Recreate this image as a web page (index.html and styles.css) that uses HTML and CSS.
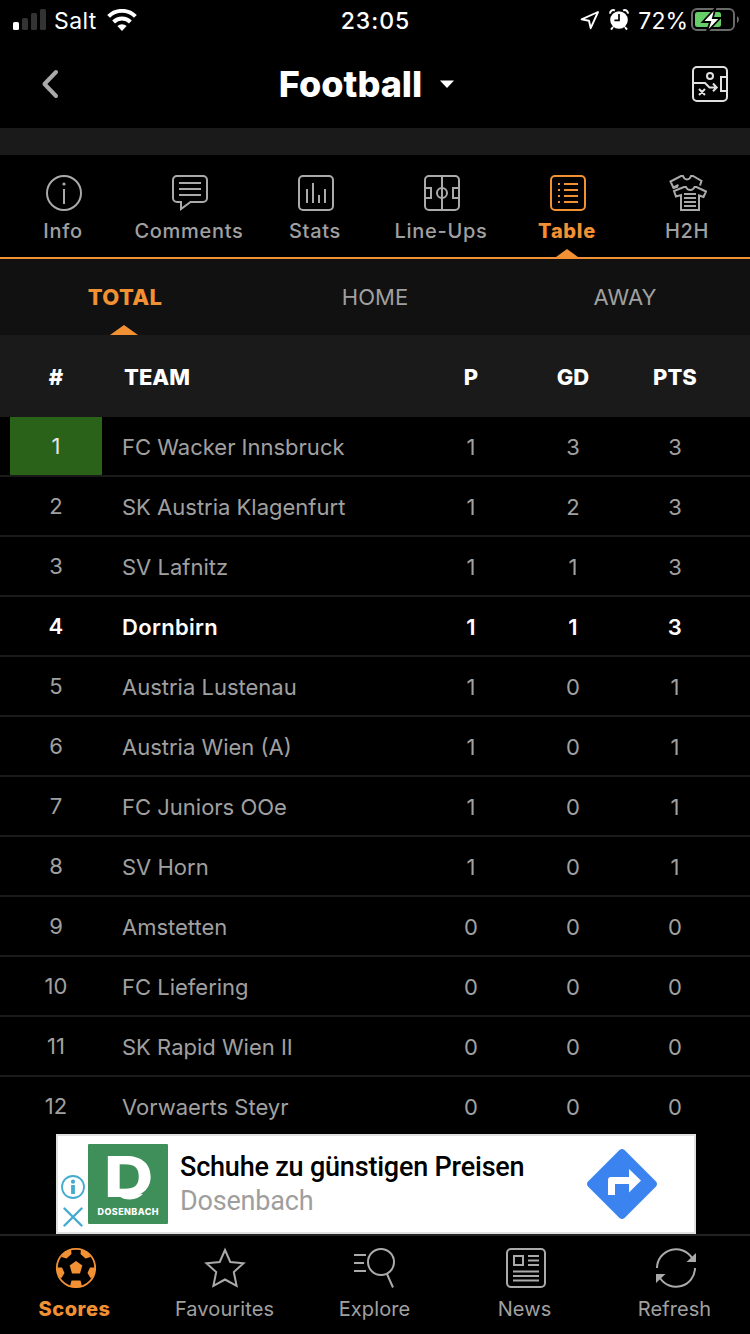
FILE: index.html
```
<!DOCTYPE html>
<html lang="en">
<head>
    <meta charset="UTF-8">
    <meta name="viewport" content="width=device-width, initial-scale=1.0">
    <title>Football</title>
    <link rel="stylesheet" href="styles.css">
</head>
<body>
    <div class="app">

        <div class="status">
            <div class="status-left">
                <svg width="34" height="22" viewBox="0 0 34 22">
                    <rect x="0" y="13" width="6" height="8" rx="1.5" fill="#fff"/>
                    <rect x="9" y="9" width="6" height="12" rx="1.5" fill="#333"/>
                    <rect x="18" y="4" width="6" height="17" rx="1.5" fill="#333"/>
                    <rect x="27" y="0" width="6" height="21" rx="1.5" fill="#333"/>
                </svg>
                <span class="carrier">Salt</span>
                <svg class="wifi" width="30" height="22" viewBox="0 0 30 22" fill="none" stroke="#fff" stroke-width="4">
                    <path d="M1.6 7.4a19 19 0 0 1 26.8 0"/>
                    <path d="M6.600 13a12 12 0 0 1 16.800 0"/>
                    <path d="M15 22l-4.6-4.9a6.6 6.6 0 0 1 9.2 0z" fill="#fff" stroke="none"/>
                </svg>
            </div>
            <div class="time">23:05</div>
            <div class="status-right">
                <svg width="20" height="20" viewBox="0 0 20 20" fill="none" stroke="#fff" stroke-width="1.9" stroke-linejoin="round">
                    <path d="M18 2L1.6 9.4l7.4 1.4 1.7 7.4z"/>
                </svg>
                <svg class="alarm" width="20" height="22" viewBox="0 0 20 22">
                    <circle cx="10" cy="11" r="8.8" fill="#fff"/>
                    <path d="M1.2 4.6a3 3 0 0 1 4.6-3M14.2 1.6a3 3 0 0 1 4.6 3M4 18l-2 2.6M16 18l2 2.6" stroke="#fff" stroke-width="2" fill="none"/>
                    <path d="M10 5v6.4H5.4" stroke="#000" stroke-width="1.7" fill="none"/>
                </svg>
                <span class="percent">72%</span>
                <svg width="49" height="26" viewBox="0 0 49 26">
                    <rect x="1" y="2" width="42" height="21" rx="5" fill="none" stroke="#6a6a6a" stroke-width="2"/>
                    <path d="M46 9.3c2.6 1.2 2.6 5.4 0 6.6z" fill="#6a6a6a"/>
                    <rect x="4" y="5" width="26" height="15" rx="2.5" fill="#67ce67"/>
                    <path d="M24.5 1L11.5 15h7.6l-3.6 10.6L29.3 11h-7.4z" fill="#fff" stroke="#000" stroke-width="1.8"/>
                </svg>
            </div>
        </div>

        <div class="navbar">
            <svg width="18" height="30" viewBox="0 0 18 30" fill="none" stroke="#aaa" stroke-width="4" stroke-linecap="round" stroke-linejoin="round">
                <path d="M15 3L3.5 15 15 27"/>
            </svg>
            <div class="title">Football
                <svg width="16" height="9" viewBox="0 0 16 9"><path d="M1 .5h14L8 8z" fill="#fff"/></svg>
            </div>
            <svg width="36" height="36" viewBox="0 0 36 36" fill="none" stroke="#e0e0e0" stroke-width="2">
                <rect x="1" y="1" width="34" height="34" rx="4"/>
                <path d="M35 11h-6v14h6M1 17h12l4.500 4.500H24M21 17.500l3.700 4L21 25.300M7 23l6 6M13 23l-6 6"/>
                <circle cx="18" cy="10" r="3"/>
            </svg>
        </div>
        <div class="strip"></div>

        <div class="tabs">
            <div class="tab">
                <svg width="36" height="36" viewBox="0 0 36 36" fill="none" stroke="currentColor" stroke-width="2">
                    <circle cx="18" cy="18" r="17"/>
                    <path d="M18 14v15"/>
                    <circle cx="18" cy="9" r="1.6" fill="currentColor" stroke="none"/>
                </svg>
                <span>Info</span>
            </div>
            <div class="tab">
                <svg width="36" height="36" viewBox="0 0 36 36" fill="none" stroke="currentColor" stroke-width="2">
                    <path d="M5 1h26a4 4 0 0 1 4 4v18a4 4 0 0 1-4 4H18.500l-9.500 7v-7H5a4 4 0 0 1-4-4V5a4 4 0 0 1 4-4z"/>
                    <path d="M7 8h22M7 14h22M7 20h22"/>
                </svg>
                <span>Comments</span>
            </div>
            <div class="tab">
                <svg width="36" height="36" viewBox="0 0 36 36" fill="none" stroke="currentColor" stroke-width="2">
                    <rect x="1" y="1" width="34" height="34" rx="4"/>
                    <path d="M9 14v14M15 8v20M21 20v8M27 14v14"/>
                </svg>
                <span>Stats</span>
            </div>
            <div class="tab">
                <svg width="36" height="36" viewBox="0 0 36 36" fill="none" stroke="currentColor" stroke-width="2">
                    <rect x="1" y="1" width="34" height="34" rx="4"/>
                    <path d="M18 1v34M1 13h6v10H1M35 13h-6v10h6"/>
                    <circle cx="18" cy="18" r="5"/>
                </svg>
                <span>Line-Ups</span>
            </div>
            <div class="tab active">
                <svg width="36" height="36" viewBox="0 0 36 36" fill="none" stroke="currentColor" stroke-width="2">
                    <rect x="1" y="1" width="34" height="34" rx="4"/>
                    <path d="M14 9h14M14 15h14M14 21h14M14 27h14M8 9h2M8 15h2M8 21h2M8 27h2"/>
                </svg>
                <span>Table</span>
            </div>
            <div class="tab last">
                <svg width="38" height="36" viewBox="0 0 38 36" fill="none" stroke="currentColor" stroke-width="2">
                    <path d="M9 11.500l-4.500 1.500L1.500 6.500 12 1h2c1.500 4.500 6.500 4.500 8 0h2l8.500 5-1.500 4.500M4.500 12.500l5-2.500"/>
                    <path d="M12 35V20l-5 1.500-2-5.500L15 12h2c1.500 4 7 4 8.500 0h2L37 16.500 34.500 22 30 20.500V35z"/>
                    <path d="M15 19h12M15 23h12M15 27h12M15 31h12"/>
                </svg>
                <span>H2H</span>
            </div>
        </div>

        <div class="subtabs">
            <div class="subtab active">TOTAL</div>
            <div class="subtab">HOME</div>
            <div class="subtab">AWAY</div>
        </div>

        <div class="row head"><span>#</span><span class="team">TEAM</span><span>P</span><span>GD</span><span>PTS</span></div>
        <div class="table">
            <div class="row"><span class="pos green">1</span><span class="team">FC Wacker Innsbruck</span><span>1</span><span>3</span><span>3</span></div>
            <div class="row"><span class="pos">2</span><span class="team">SK Austria Klagenfurt</span><span>1</span><span>2</span><span>3</span></div>
            <div class="row"><span class="pos">3</span><span class="team">SV Lafnitz</span><span>1</span><span>1</span><span>3</span></div>
            <div class="row bold"><span class="pos">4</span><span class="team">Dornbirn</span><span>1</span><span>1</span><span>3</span></div>
            <div class="row"><span class="pos">5</span><span class="team">Austria Lustenau</span><span>1</span><span>0</span><span>1</span></div>
            <div class="row"><span class="pos">6</span><span class="team">Austria Wien (A)</span><span>1</span><span>0</span><span>1</span></div>
            <div class="row"><span class="pos">7</span><span class="team">FC Juniors OOe</span><span>1</span><span>0</span><span>1</span></div>
            <div class="row"><span class="pos">8</span><span class="team">SV Horn</span><span>1</span><span>0</span><span>1</span></div>
            <div class="row"><span class="pos">9</span><span class="team">Amstetten</span><span>0</span><span>0</span><span>0</span></div>
            <div class="row"><span class="pos">10</span><span class="team">FC Liefering</span><span>0</span><span>0</span><span>0</span></div>
            <div class="row"><span class="pos">11</span><span class="team">SK Rapid Wien II</span><span>0</span><span>0</span><span>0</span></div>
            <div class="row"><span class="pos">12</span><span class="team">Vorwaerts Steyr</span><span>0</span><span>0</span><span>0</span></div>
        </div>

        <div class="ad">
            <div class="ad-marks">
                <svg width="24" height="24" viewBox="0 0 24 24" fill="none" stroke="#44abd0" stroke-width="1.8">
                    <circle cx="12" cy="12" r="11"/>
                    <path d="M12 10v9" stroke-width="3.8"/>
                    <circle cx="12" cy="6.7" r="2.1" fill="#44abd0" stroke="none"/>
                </svg>
                <svg width="20" height="20" viewBox="0 0 20 20" fill="none" stroke="#44abd0" stroke-width="2.4" stroke-linecap="round">
                    <path d="M1.5 1.5l17 17M18.5 1.5l-17 17"/>
                </svg>
            </div>
            <svg class="ad-logo" width="80" height="80" viewBox="0 0 80 80">
                <rect width="80" height="80" rx="1" fill="#3f8f5b"/>
                <text class="logo-letter" transform="translate(16 53) scale(1.22 1)">D</text>
                <path d="M31 52q4 3.500 11 3.500 8-.5 13-5.500z" fill="#fff"/>
                <text class="logo-name" x="9.5" y="70.5" textLength="61">DOSENBACH</text>
            </svg>
            <div class="ad-text">
                <div class="ad-title">Schuhe zu günstigen Preisen</div>
                <div class="ad-brand">Dosenbach</div>
            </div>
            <svg class="ad-arrow" width="70" height="70" viewBox="0 0 70 70">
                <path d="M32.500 1q2.500-2 5 0L69 32.500q2 2.500 0 5L37.500 69q-2.500 2-5 0L1 37.500q-2-2.500 0-5z" fill="#3b83ee"/>
                <path d="M21 46V31q0-3 3-3h18v-8l12 11.500L42 43.500V35H28v11z" fill="#fff"/>
            </svg>
        </div>

        <div class="bottombar">
            <div class="item active">
                <svg width="42" height="42" viewBox="0 0 42 42" fill="currentColor">
                    <circle cx="22" cy="21" r="19.2" fill="none" stroke="currentColor" stroke-width="1.8"/>
                    <path d="M22 14l6.300 4.500L26 26.500h-8l-2.300-8z"/>
                    <path d="M10 5.500L17 2l.5 5-5 4.500L7.500 10zM34 5.500L27 2l-.5 5 5 4.500 5-1.500zM2.500 20.500H8l2.500 5.500-3 5-3-1zM41.500 20.500H36L33.500 26l3 5 3-1zM17.500 33.500h9l1.500 6-6 1.500-6-1.500z"/>
                </svg>
                <span>Scores</span>
            </div>
            <div class="item">
                <svg width="42" height="42" viewBox="0 0 42 42" fill="none" stroke="currentColor" stroke-width="2">
                    <path d="M21 3l5.3 12L39.5 16.3 29.8 25 32.6 38.8 21 32.5 9.4 38.8 12.2 25 2.5 16.3 15.7 15z"/>
                </svg>
                <span>Favourites</span>
            </div>
            <div class="item">
                <svg width="42" height="42" viewBox="0 0 42 42" fill="none" stroke="currentColor" stroke-width="2">
                    <circle cx="27" cy="15" r="13"/>
                    <path d="M33 27l6 13.500M0 8h12M0 16h10M0 24h12"/>
                </svg>
                <span>Explore</span>
            </div>
            <div class="item">
                <svg width="42" height="42" viewBox="0 0 42 42" fill="none" stroke="currentColor" stroke-width="2">
                    <rect x="3" y="2" width="38" height="38" rx="4"/>
                    <rect x="10" y="9" width="9" height="9"/>
                    <path d="M24 9h11M24 13.500h11M24 18h11M9 24.500h26M9 29h26M9 33.500h26"/>
                </svg>
                <span>News</span>
            </div>
            <div class="item">
                <svg width="42" height="42" viewBox="0 0 42 42" fill="none" stroke="currentColor" stroke-width="2">
                    <path d="M3 21a19 19 0 0 1 35-10M41 21a19 19 0 0 1-35 10"/>
                    <path d="M42 6v9h-9.500zM2 36v-9h9.500z" fill="currentColor" stroke="none"/>
                </svg>
                <span>Refresh</span>
            </div>
        </div>

    </div>
</body>
</html>
```

FILE: styles.css
```
* {
    margin: 0;
    padding: 0;
    box-sizing: border-box;
}
body {
    background: #000;
    color: #a0a0a0;
    font-family: Inter, "Liberation Sans", sans-serif;
}
svg {
    display: block;
    flex: none;
}
.app {
    width: 750px;
    height: 1334px;
    overflow: hidden;
}

/* status bar */
.status {
    height: 40px;
    padding: 0 10px 0 13px;
    display: grid;
    grid-template-columns: 1fr 80px 1fr;
    align-items: center;
    color: #fff;
    font-size: 23px;
}
.status-left,
.status-right {
    display: flex;
    align-items: center;
}
.status-right {
    justify-content: flex-end;
}
.carrier {
    margin-left: 7px;
    padding-top: 2px;
    letter-spacing: 0.4px;
}
.wifi {
    margin-left: 10px;
}
.time {
    padding: 2px 2px 0 0;
    text-align: center;
    font-weight: 500;
    letter-spacing: 1px;
}
.alarm {
    margin: 0 9px 0 9px;
}
.percent {
    margin-right: 3px;
    padding-top: 2px;
}

/* title */
.navbar {
    height: 88px;
    padding: 0 22px 0 41px;
    display: flex;
    align-items: center;
    justify-content: space-between;
}
.title {
    margin-right: 17px;
    display: flex;
    align-items: center;
    gap: 17px;
    color: #fff;
    font-size: 36px;
    font-weight: 800;
}
.strip {
    height: 27px;
    background: #1a1a1a;
}

/* main tabs */
.tabs {
    height: 104px;
    padding: 20px 0 0 1px;
    display: flex;
    border-bottom: 2px solid #f29134;
}
.tab {
    position: relative;
    width: 126px;
    display: flex;
    flex-direction: column;
    align-items: center;
    gap: 8px;
    font-size: 20px;
    line-height: 24px;
    font-weight: 500;
    letter-spacing: 0.7px;
}
.tab span {
    margin-right: 2px;
}
.tab svg {
    color: #aaa;
}
.tab.last {
    width: 114px;
}
.tab.active,
.tab.active svg {
    color: #f29134;
}
.tab.active {
    font-weight: 800;
}
.tab.active:after,
.subtab.active:after {
    content: "";
    position: absolute;
    bottom: 0;
    left: 50%;
    width: 22px;
    height: 8px;
    margin-left: -12px;
    background: #f29134;
    clip-path: polygon(50% 0, 100% 100%, 0 100%);
}

/* total / home / away */
.subtabs {
    height: 76px;
    display: flex;
    background: #111;
}
.subtab {
    position: relative;
    flex: 1;
    text-align: center;
    font-size: 22px;
    line-height: 77px;
}
.subtab.active {
    color: #f29134;
    font-weight: 800;
    letter-spacing: 0.4px;
}
.subtab.active:after {
    width: 28px;
    height: 10px;
    margin-left: -15px;
}

/* standings */
.table {
    height: 717px;
    overflow: hidden;
}
.row {
    height: 60px;
    padding: 0 24px 0 10px;
    display: grid;
    grid-template-columns: 92px 1fr 102px 102px 102px;
    border-bottom: 2px solid #1a1a1a;
    font-size: 22px;
    line-height: 60px;
    text-align: center;
}
.row .team {
    padding-left: 20px;
    text-align: left;
}
.row .pos {
    height: 58px;
    line-height: 58px;
}
.row .green {
    background: #2b6219;
    color: #e6e6e6;
}
.row.bold {
    color: #fff;
    font-weight: 600;
    letter-spacing: 0.3px;
}
.row.head {
    height: 82px;
    background: #1a1a1a;
    color: #fff;
    font-weight: 800;
    line-height: 84px;
}
.row.head .team {
    padding-left: 22px;
}

/* banner */
.ad {
    width: 640px;
    height: 100px;
    margin-left: 56px;
    padding: 0 37px 0 3px;
    display: flex;
    align-items: center;
    background: #fff;
    border: 2px solid #e0e0e0;
    font-family: Roboto, "Liberation Sans", sans-serif;
}
.ad-marks {
    width: 24px;
    padding-top: 34px;
    display: flex;
    flex-direction: column;
    align-items: center;
    gap: 8px;
}
.ad-logo {
    margin-left: 3px;
}
.logo-letter {
    font-family: Inter, sans-serif;
    font-size: 56px;
    font-weight: 800;
    fill: #fff;
}
.logo-name {
    font-family: Inter, sans-serif;
    font-size: 9px;
    font-weight: 800;
    fill: #fff;
}
.ad-text {
    flex: 1;
    margin-left: 12px;
    font-size: 27px;
    line-height: 34px;
    white-space: nowrap;
}
.ad-title {
    color: #000;
    font-weight: 500;
    letter-spacing: -0.2px;
}
.ad-brand {
    color: #9e9e9e;
    letter-spacing: -0.2px;
}

/* bottom bar */
.bottombar {
    height: 100px;
    padding-top: 11px;
    display: flex;
    border-top: 2px solid #222;
}
.item {
    width: 150px;
    display: flex;
    flex-direction: column;
    align-items: center;
    gap: 8px;
    font-size: 20px;
    line-height: 24px;
    letter-spacing: 0.1px;
}
.item span {
    margin-right: 1px;
}
.item svg {
    color: #aaa;
}
.item.active,
.item.active svg {
    color: #f29134;
}
.item.active {
    font-weight: 800;
    letter-spacing: 0.5px;
}
```
